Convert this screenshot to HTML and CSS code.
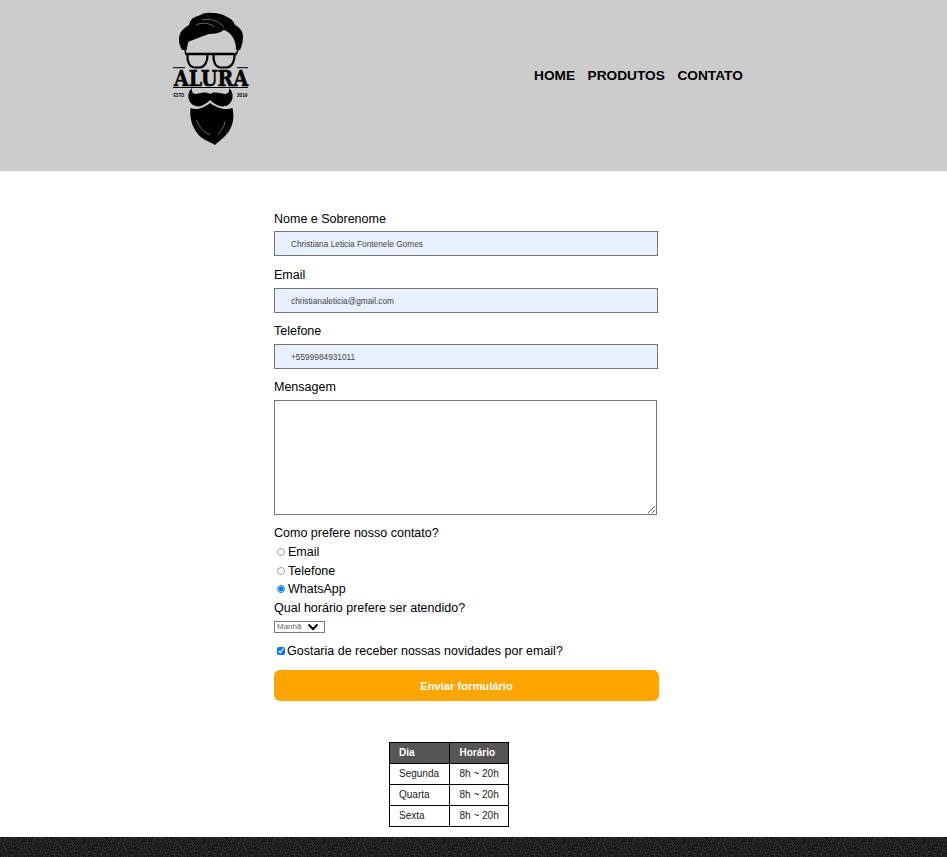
FILE: index.html
```html
<!DOCTYPE html>
<html lang="pt-BR">
<head>
  <meta charset="UTF-8" />
  <title>Contato - Barbearia Alura</title>
  <link rel="stylesheet" href="styles.css">
</head>
<body>

<header class="topo">
  <div class="topo-inner">
    <svg class="logo" viewBox="0 0 77 135" role="img" aria-label="Logo Alura">
      <!-- cabelo -->
      <path d="M10 38 C7 33 6 27 8 22 C10 17 14 15 17 13 C18 8 21 5 26 4 C31 1 35 0 40 1 C47 1 52 3 55 5 C60 7 62 10 63 13 C67 15 71 19 71 24 C71 29 70 34 68 38 L64 38 C64 33 63 28 60 24 C58 21 55 19 52 18 C48 21 42 22 37 22 C31 24 26 26 21 28 C19 29 17 29 16.5 30 C15.5 32 15 35 15 38 Z" fill="#000"/>
      <path d="M30 8 C38 6 47 9 52 15 M24 13 C30 10 38 11 43 15" stroke="#ccc" stroke-width="0.5" fill="none"/>
      <path d="M13 38 L14 43 M66 38 L64 43" stroke="#000" stroke-width="1.5" fill="none"/>
      <!-- oculos -->
      <path d="M14 42 L65 42" stroke="#000" stroke-width="2.4" fill="none"/>
      <path d="M15.5 42 L35.5 42 C36 49 33 55.5 27 55.5 L23 55.5 C17 55.5 15 49 15.5 42 Z M41.5 42 L62.5 42 C63 49 60 55.5 54 55.5 L49 55.5 C43 55.5 41 49 41.5 42 Z" fill="none" stroke="#000" stroke-width="2.2"/>
      <path d="M1 55.7 L13 55.7 M65 55.7 L76 55.7" stroke="#000" stroke-width="1" fill="none"/>
      <text transform="translate(2 74) scale(1 1.15)" class="logo-nome">ALURA</text>
      <path d="M1 75.5 L76 75.5" stroke="#000" stroke-width="1" fill="none"/>
      <text x="1.5" y="85" class="logo-data" textLength="10.5" lengthAdjust="spacingAndGlyphs">ESTD</text>
      <text x="65" y="85" class="logo-data" textLength="10.5" lengthAdjust="spacingAndGlyphs">2019</text>
      <!-- barba -->
      <path d="M18.5 96 C25 99 33 95 38 91 C44 95 52 99 60.5 96 C62.5 106 61 113 56.5 120 C52 126 47 129 43 133 C37 129 30 128 25 121 C20 114 17.5 106 18.5 96 Z" fill="#000"/>
      <path d="M24.5 108 C27 115 31 120 38 123 M53 110 C52 115 49 119 46 122" stroke="#ccc" stroke-width="0.5" fill="none"/>
      <!-- bigode -->
      <path d="M20 76 C15 80 15 89 21 93 C27 96.5 33 93 38 88 C43 93 50 96.5 56 93 C62 89 62 80 57 76 C58 79 56 82 53 82 C47 81 43 79 38 82 C33 79 29 81 24 82 C21 82 19 79 20 76 Z" fill="#000"/>
    </svg>
    <nav class="menu">
      <a href="#">HOME</a>
      <a href="#">PRODUTOS</a>
      <a href="#">CONTATO</a>
    </nav>
  </div>
</header>

<main class="conteudo">
  <form class="formulario">
    <label class="rotulo" for="nome">Nome e Sobrenome</label>
    <input class="campo campo-nome" type="text" id="nome" value="Christiana Leticia Fontenele Gomes" />

    <label class="rotulo" for="email">Email</label>
    <input class="campo" type="email" id="email" value="christianaleticia@gmail.com" />

    <label class="rotulo" for="telefone">Telefone</label>
    <input class="campo" type="tel" id="telefone" value="+5599984931011" />

    <label class="rotulo" for="mensagem">Mensagem</label>
    <textarea class="mensagem" id="mensagem"></textarea>

    <p class="pergunta">Como prefere nosso contato?</p>
    <label class="opcao"><input type="radio" name="contato" />Email</label>
    <label class="opcao"><input type="radio" name="contato" />Telefone</label>
    <label class="opcao"><input type="radio" name="contato" checked />WhatsApp</label>

    <label class="pergunta" for="horario">Qual horário prefere ser atendido?</label>
    <select class="horario" id="horario">
      <option>Manhã</option>
      <option>Tarde</option>
      <option>Noite</option>
    </select>

    <label class="novidades"><input type="checkbox" checked />Gostaria de receber nossas novidades por email?</label>

    <button class="enviar" type="submit">Enviar formulário</button>
  </form>

  <table class="tabela">
    <thead>
      <tr><th>Dia</th><th>Horário</th></tr>
    </thead>
    <tbody>
      <tr><td>Segunda</td><td>8h ~ 20h</td></tr>
      <tr><td>Quarta</td><td>8h ~ 20h</td></tr>
      <tr><td>Sexta</td><td>8h ~ 20h</td></tr>
    </tbody>
  </table>
</main>

<footer class="rodape"></footer>

</body>
</html>
```
FILE: styles.css
```css
* {
  box-sizing: border-box;
}

body {
  margin: 0;
  font-family: "Liberation Sans", Arial, sans-serif;
  background-color: #fff;
  color: #000;
}

.topo {
  height: 171px;
  background-color: #ccc;
}

.topo-inner {
  display: flex;
  align-items: flex-start;
  padding: 12px 0 0 172px;
}

.logo {
  width: 77px;
  height: 135px;
  flex-shrink: 0;
}

.logo-nome {
  font-family: "DejaVu Serif", serif;
  font-size: 19px;
  font-weight: bold;
  stroke: #000;
  stroke-width: 0.5px;
}

.logo-data {
  font-family: "Liberation Sans", sans-serif;
  font-size: 6px;
  font-weight: bold;
}

.menu {
  display: flex;
  gap: 12.5px;
  margin: 56px 0 0 285px;
}

.menu a {
  color: #000;
  font-size: 13.7px;
  line-height: 16px;
  font-weight: bold;
  text-decoration: none;
}

.conteudo {
  height: 666px;
  padding: 41px 0 0 274px;
}

.formulario {
  display: flex;
  flex-direction: column;
  align-items: flex-start;
  width: 385px;
}

.rotulo {
  font-size: 12.5px;
  line-height: 15px;
  margin-bottom: 5px;
}

.campo {
  width: 384px;
  height: 25px;
  margin-bottom: 11px;
  padding: 0 16px;
  border: 1px solid #767676;
  background-color: #e8f0fe;
  color: #444;
  font-family: inherit;
  font-size: 8.3px;
}

.campo-nome {
  margin-top: -1px;
  margin-bottom: 12px;
}

.mensagem {
  width: 383px;
  height: 115px;
  margin-bottom: 9px;
  border: 1px solid #767676;
}

.pergunta {
  margin: 0;
  font-size: 12.5px;
  line-height: 19px;
}

.opcao,
.novidades {
  display: flex;
  align-items: center;
  font-size: 12.5px;
  line-height: 18.6px;
}

.opcao input,
.novidades input {
  width: 8px;
  height: 8px;
  margin: 0 3px;
}

.opcao input:not(:checked) {
  opacity: 0.7;
}

.horario {
  appearance: none;
  width: 51px;
  height: 12px;
  margin-top: 3px;
  padding: 0 0 0 2px;
  border: 1px solid #767676;
  background: #fff url("data:image/svg+xml,%3Csvg xmlns='http://www.w3.org/2000/svg' viewBox='0 0 12 8'%3E%3Cpath d='M1.5 1.5L6 6l4.5-4.5' fill='none' stroke='%23000' stroke-width='2'/%3E%3C/svg%3E") no-repeat right 5px center / 12px 8px;
  color: #666;
  font-family: inherit;
  font-size: 8px;
}

.novidades {
  margin-top: 9px;
}

.novidades input {
  margin-right: 2px;
}

.enviar {
  width: 385px;
  height: 31px;
  margin-top: 10px;
  border: none;
  border-radius: 6px;
  background-color: #ffa500;
  color: #fff;
  font-family: inherit;
  font-size: 11.2px;
  font-weight: bold;
}

.tabela {
  table-layout: fixed;
  width: 120px;
  margin: 41px 0 0 115px;
  border-collapse: collapse;
  font-size: 10px;
}

.tabela th,
.tabela td {
  height: 21px;
  padding: 0 0 1px 10px;
  border: 1px solid #000;
  text-align: left;
  white-space: nowrap;
  color: #222;
}

.tabela th {
  background-color: #555;
  color: #fff;
}

.tabela td:first-child,
.tabela th:first-child {
  padding-left: 9px;
}

.rodape {
  height: 20px;
  background-color: #141414;
  background-image: url("data:image/svg+xml,%3Csvg xmlns='http://www.w3.org/2000/svg' width='120' height='20'%3E%3Cfilter id='n'%3E%3CfeTurbulence type='fractalNoise' baseFrequency='0.7' numOctaves='2'/%3E%3CfeColorMatrix values='0 0 0 0 1 0 0 0 0 1 0 0 0 0 1 0.5 0 0 0 -0.2'/%3E%3C/filter%3E%3Crect width='120' height='20' filter='url(%23n)'/%3E%3C/svg%3E");
}
```
